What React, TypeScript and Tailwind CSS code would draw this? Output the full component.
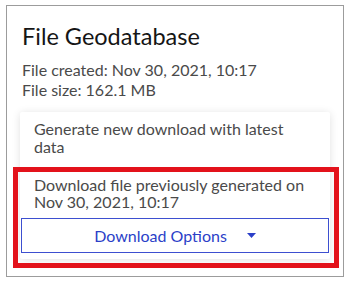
import React from 'react';

const font = { fontFamily: 'Lato, "Noto Sans", sans-serif' };

const Caret: React.FC = () => (
  <svg width="9" height="5" viewBox="0 0 9 5" className="ml-[20px]">
    <path d="M0 0 H9 L4.5 5 Z" fill="#2b3fc8" />
  </svg>
);

export default function App() {
  return (
    <div className="w-[352px] h-[284px] bg-white pt-[5px] pl-[6px]" style={font}>
      <div className="relative w-[338px] h-[272px] border border-[#9c9c9c] bg-white">
        <div className="px-[15px] pt-[16px]">
          <h1 className="text-[23.5px] leading-[28px] text-[#151515]">File Geodatabase</h1>
          <div className="mt-[10px] text-[16px] leading-[20px] text-[#4a4a4a]">
            <p>File created: Nov 30, 2021, 10:17</p>
            <p>File size: 162.1 MB</p>
          </div>
        </div>

        <div className="ml-[13px] mt-[12px] w-[310px] bg-white rounded-[2px] shadow-[0_1px_8px_rgba(0,0,0,0.12)] pb-[6px]">
          <div className="w-[290px] pl-[14px] pt-[8px] text-[16px] leading-[18px] text-[#4a4a4a]">
            Generate new download with latest data
          </div>
          <div className="w-[292px] pl-[14px] pt-[20px] text-[16px] leading-[17px] text-[#4a4a4a]">
            Download file previously generated on Nov 30, 2021, 10:17
          </div>
          <button className="mt-[8px] mx-[1px] w-[308px] h-[35px] border border-[#3d4fd0] bg-white flex items-center justify-center text-[16px] text-[#2b3fc8]">
            <span>Download Options</span>
            <Caret />
          </button>
        </div>

        <div className="absolute left-[6px] top-[161px] w-[326px] h-[101px] border-[5px] border-[#e3121b] pointer-events-none" />
      </div>
    </div>
  );
}
